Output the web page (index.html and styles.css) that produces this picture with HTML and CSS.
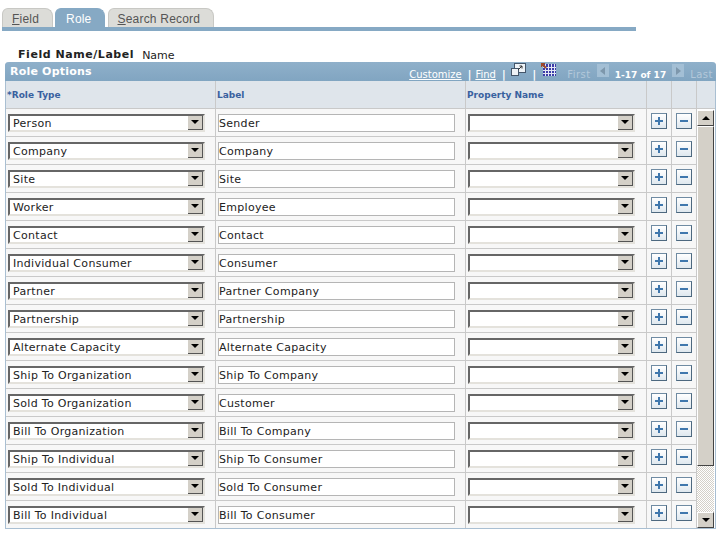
FILE: index.html
```html
<!DOCTYPE html>
<html lang="en">
  <head>
    <meta charset="UTF-8">
    <title>Role</title>
    <link rel="stylesheet" href="styles.css">
  </head>
  <body>
    <div class="tabs">
      <div class="tab"><u>F</u>ield</div>
      <div class="tab tabActive">Role</div>
      <div class="tab"><u>S</u>earch Record</div>
    </div>
    <div class="tabBar"></div>

    <p class="fieldLine"><b>Field Name/Label</b><span>Name</span></p>

    <section class="panel">
      <div class="panelHead">
        <h2>Role Options</h2>
        <div class="panelNav">
          <a>Customize</a><i>|</i><a>Find</a><i>|</i>
          <svg class="navIcon" width="15" height="14" viewBox="0 0 15 14"><rect x="3.5" y="0.5" width="11" height="9" fill="#eef3f7" stroke="#44566a"/><rect x="0.5" y="5.5" width="7" height="7" fill="#eef3f7" stroke="#44566a"/><path d="M7 7l4-4M8.5 3H11v2.5" fill="none" stroke="#333"/></svg>
          <i>|</i>
          <svg class="navIcon" width="15" height="14" viewBox="0 0 15 14"><rect x="2" y="1" width="13" height="12" fill="#3c3ca8"/><path d="M4.500 1v12M7.500 1v12M10.500 1v12M13.500 1v12M2 4.500h13M2 7.500h13M2 10.500h13" stroke="#e4e8f4"/><path d="M0 0l5 5M0 4V0h4" fill="none" stroke="#a04a28" stroke-width="2"/></svg>
          <span class="navOff navFirst">First</span>
          <span class="pageBtn"><span class="triLeft"></span></span>
          <b>1-17 of 17</b>
          <span class="pageBtn"><span class="triRight"></span></span>
          <span class="navOff">Last</span>
        </div>
      </div>

      <div class="headRow">
        <div class="colRole">*Role Type</div>
        <div class="colLabel">Label</div>
        <div class="colProp">Property Name</div>
        <div class="colBtn"></div>
        <div class="colBtn"></div>
        <div class="colScroll"></div>
      </div>

      <div class="tableBody">
        <div class="rows">
          <div class="row"><div class="colRole"><div class="sel"><span>Person</span><em></em></div></div><div class="colLabel"><input value="Sender"></div><div class="colProp"><div class="sel"><span></span><em></em></div></div><div class="colBtn"><button class="btnPlus"></button></div><div class="colBtn"><button class="btnMinus"></button></div></div>
          <div class="row"><div class="colRole"><div class="sel"><span>Company</span><em></em></div></div><div class="colLabel"><input value="Company"></div><div class="colProp"><div class="sel"><span></span><em></em></div></div><div class="colBtn"><button class="btnPlus"></button></div><div class="colBtn"><button class="btnMinus"></button></div></div>
          <div class="row"><div class="colRole"><div class="sel"><span>Site</span><em></em></div></div><div class="colLabel"><input value="Site"></div><div class="colProp"><div class="sel"><span></span><em></em></div></div><div class="colBtn"><button class="btnPlus"></button></div><div class="colBtn"><button class="btnMinus"></button></div></div>
          <div class="row"><div class="colRole"><div class="sel"><span>Worker</span><em></em></div></div><div class="colLabel"><input value="Employee"></div><div class="colProp"><div class="sel"><span></span><em></em></div></div><div class="colBtn"><button class="btnPlus"></button></div><div class="colBtn"><button class="btnMinus"></button></div></div>
          <div class="row"><div class="colRole"><div class="sel"><span>Contact</span><em></em></div></div><div class="colLabel"><input value="Contact"></div><div class="colProp"><div class="sel"><span></span><em></em></div></div><div class="colBtn"><button class="btnPlus"></button></div><div class="colBtn"><button class="btnMinus"></button></div></div>
          <div class="row"><div class="colRole"><div class="sel"><span>Individual Consumer</span><em></em></div></div><div class="colLabel"><input value="Consumer"></div><div class="colProp"><div class="sel"><span></span><em></em></div></div><div class="colBtn"><button class="btnPlus"></button></div><div class="colBtn"><button class="btnMinus"></button></div></div>
          <div class="row"><div class="colRole"><div class="sel"><span>Partner</span><em></em></div></div><div class="colLabel"><input value="Partner Company"></div><div class="colProp"><div class="sel"><span></span><em></em></div></div><div class="colBtn"><button class="btnPlus"></button></div><div class="colBtn"><button class="btnMinus"></button></div></div>
          <div class="row"><div class="colRole"><div class="sel"><span>Partnership</span><em></em></div></div><div class="colLabel"><input value="Partnership"></div><div class="colProp"><div class="sel"><span></span><em></em></div></div><div class="colBtn"><button class="btnPlus"></button></div><div class="colBtn"><button class="btnMinus"></button></div></div>
          <div class="row"><div class="colRole"><div class="sel"><span>Alternate Capacity</span><em></em></div></div><div class="colLabel"><input value="Alternate Capacity"></div><div class="colProp"><div class="sel"><span></span><em></em></div></div><div class="colBtn"><button class="btnPlus"></button></div><div class="colBtn"><button class="btnMinus"></button></div></div>
          <div class="row"><div class="colRole"><div class="sel"><span>Ship To Organization</span><em></em></div></div><div class="colLabel"><input value="Ship To Company"></div><div class="colProp"><div class="sel"><span></span><em></em></div></div><div class="colBtn"><button class="btnPlus"></button></div><div class="colBtn"><button class="btnMinus"></button></div></div>
          <div class="row"><div class="colRole"><div class="sel"><span>Sold To Organization</span><em></em></div></div><div class="colLabel"><input value="Customer"></div><div class="colProp"><div class="sel"><span></span><em></em></div></div><div class="colBtn"><button class="btnPlus"></button></div><div class="colBtn"><button class="btnMinus"></button></div></div>
          <div class="row"><div class="colRole"><div class="sel"><span>Bill To Organization</span><em></em></div></div><div class="colLabel"><input value="Bill To Company"></div><div class="colProp"><div class="sel"><span></span><em></em></div></div><div class="colBtn"><button class="btnPlus"></button></div><div class="colBtn"><button class="btnMinus"></button></div></div>
          <div class="row"><div class="colRole"><div class="sel"><span>Ship To Individual</span><em></em></div></div><div class="colLabel"><input value="Ship To Consumer"></div><div class="colProp"><div class="sel"><span></span><em></em></div></div><div class="colBtn"><button class="btnPlus"></button></div><div class="colBtn"><button class="btnMinus"></button></div></div>
          <div class="row"><div class="colRole"><div class="sel"><span>Sold To Individual</span><em></em></div></div><div class="colLabel"><input value="Sold To Consumer"></div><div class="colProp"><div class="sel"><span></span><em></em></div></div><div class="colBtn"><button class="btnPlus"></button></div><div class="colBtn"><button class="btnMinus"></button></div></div>
          <div class="row"><div class="colRole"><div class="sel"><span>Bill To Individual</span><em></em></div></div><div class="colLabel"><input value="Bill To Consumer"></div><div class="colProp"><div class="sel"><span></span><em></em></div></div><div class="colBtn"><button class="btnPlus"></button></div><div class="colBtn"><button class="btnMinus"></button></div></div>
        </div>

        <div class="scrollbar">
          <div class="scrollBtn"><span class="triUp"></span></div>
          <div class="scrollThumb"></div>
          <div class="scrollTrack"></div>
          <div class="scrollBtn"><span class="triDown"></span></div>
        </div>
      </div>
    </section>
  </body>
</html>
```

FILE: styles.css
```css
body {
  margin: 0;
  background-color: white;
  color: #222;
  font-family: "DejaVu Sans", Verdana, sans-serif;
  font-size: 11px;
}

.tabs {
  display: flex;
  gap: 2px;
  margin: 8px 0 0 2px;
  height: 19px;
}

.tab {
  padding: 0 13px 0 9px;
  line-height: 20px;
  font-family: "Liberation Sans", Arial, sans-serif;
  font-size: 12px;
  letter-spacing: 0.2px;
  color: #555;
  background-color: #dcdcd8;
  border: 1px solid #c8c8c4;
  border-bottom: none;
  border-radius: 6px 8px 0 0;
}

.tabActive {
  color: white;
  background-color: #86a9c4;
  border-color: #86a9c4;
  padding: 0 12px 0 10px;
  margin-right: 1px;
}

.tabBar {
  width: 634px;
  height: 4px;
  margin-left: 2px;
  background-color: #86a9c4;
}

.fieldLine {
  display: flex;
  gap: 8px;
  margin: 15px 0 0 18px;
  height: 16px;
  line-height: 16px;
}

.fieldLine b {
  padding-top: 1px;
  letter-spacing: 0.55px;
}

.fieldLine span {
  padding-top: 2px;
}

.panel {
  width: 709px;
  margin: 0 0 0 5px;
  border: 1px solid #a9bfd2;
  border-top: none;
  border-radius: 4px 4px 0 0;
}

.panelHead {
  display: flex;
  justify-content: space-between;
  height: 19px;
  padding: 0 3px 0 5px;
  margin: 0 -1px;
  background: linear-gradient(#8fb0ca, #81a5c1);
  border-radius: 4px 4px 0 0;
  color: white;
}

h2 {
  margin: 0;
  font-size: 11px;
  font-weight: bold;
  line-height: 20px;
  letter-spacing: 0.2px;
}

.panelNav {
  display: flex;
  align-items: center;
  gap: 6px;
  padding: 6px 0 0 0;
  font-size: 10px;
}

.panelNav a {
  text-decoration: underline;
}

.panelNav i {
  font-style: normal;
  font-weight: bold;
  margin-right: -2px;
}

.panelNav b {
  font-size: 9px;
}

.navIcon {
  align-self: flex-start;
  margin: -5px 1px 0 1px;
}

.navOff {
  color: #b3c8da;
  letter-spacing: 0.5px;
}

.navFirst {
  margin-left: 4px;
}

.pageBtn {
  display: flex;
  align-items: center;
  justify-content: center;
  align-self: flex-start;
  width: 12px;
  height: 13px;
  margin-top: -4px;
  background-color: #a3bfd5;
}

.triLeft, .triRight, .triUp, .triDown {
  display: block;
  width: 0;
  height: 0;
  border-style: solid;
}

.triLeft {
  border-width: 4px 5px 4px 0;
  border-color: transparent #7d97ac transparent transparent;
}

.triRight {
  border-width: 4px 0 4px 5px;
  border-color: transparent transparent transparent #7d97ac;
}

.triUp {
  border-width: 0 4px 4px 4px;
  border-color: transparent transparent black transparent;
}

.triDown {
  border-width: 4px 4px 0 4px;
  border-color: black transparent transparent transparent;
}

.headRow {
  display: flex;
  height: 27px;
  background-color: #dfe5eb;
  border-bottom: 1px solid #c9c9c9;
  color: #39619f;
  font-size: 9px;
  font-weight: bold;
  line-height: 28px;
}

.headRow > div {
  padding-left: 1px;
  border-right: 1px solid #c9c9c9;
}

.headRow .colScroll {
  flex: 1;
  border-right: none;
}

.colRole {
  box-sizing: border-box;
  width: 210px;
}

.colLabel {
  box-sizing: border-box;
  width: 250px;
}

.colProp {
  box-sizing: border-box;
  width: 181px;
}

.colBtn {
  box-sizing: border-box;
  width: 25px;
}

.tableBody {
  display: flex;
}

.rows {
  width: 691px;
}

.row {
  display: flex;
  height: 27px;
  background-color: #f7f7f7;
  border-bottom: 1px solid #c9c9c9;
}

.row > div {
  display: flex;
  align-items: center;
  padding-left: 2px;
  border-right: 1px solid #c9c9c9;
}

.row:last-child {
  border-bottom: none;
}

.sel {
  box-sizing: border-box;
  display: flex;
  align-items: center;
  justify-content: space-between;
  height: 18px;
  background-color: white;
  border: 2px solid;
  border-color: #666 #e4e2dc #e4e2dc #666;
}

.colRole .sel {
  width: 197px;
}

.colProp .sel {
  width: 167px;
}

.sel span {
  padding: 1px 0 0 3px;
  font-size: 11px;
  letter-spacing: 0.3px;
}

.sel em {
  display: flex;
  align-items: center;
  justify-content: center;
  width: 15px;
  height: 14px;
  background-color: #d4d0c8;
  border-right: 1px solid #555;
  border-bottom: 1px solid #555;
  box-sizing: border-box;
}

.sel em::after {
  content: "";
  border-style: solid;
  border-width: 4px 4px 0 4px;
  border-color: black transparent transparent transparent;
}

input {
  box-sizing: border-box;
  width: 237px;
  height: 18px;
  padding: 1px 0 0 0;
  background-color: white;
  border: 1px solid #b5b5b5;
  color: #222;
  font-family: "DejaVu Sans", Verdana, sans-serif;
  font-size: 11px;
  letter-spacing: 0.3px;
}

button {
  position: relative;
  box-sizing: border-box;
  width: 16px;
  height: 16px;
  margin: 0 0 3px 2px;
  padding: 0;
  background: linear-gradient(white, #dfe8ef);
  border: 1px solid #6f8ba3;
  border-right-color: #4d687f;
  border-bottom-color: #4d687f;
}

.btnPlus::before, .btnMinus::before {
  content: "";
  position: absolute;
  left: 3px;
  top: 6px;
  width: 8px;
  height: 2px;
  background-color: #3f77ad;
}

.btnPlus::after {
  content: "";
  position: absolute;
  left: 6px;
  top: 3px;
  width: 2px;
  height: 8px;
  background-color: #3f77ad;
}

.scrollbar {
  display: flex;
  flex-direction: column;
  width: 17px;
  padding-top: 1px;
}

.scrollBtn {
  display: flex;
  align-items: center;
  justify-content: center;
  box-sizing: border-box;
  height: 16px;
  background-color: #d4d0c8;
  border: 1px solid;
  border-color: white #444 #444 white;
}

.scrollThumb {
  box-sizing: border-box;
  height: 340px;
  background-color: #d4d0c8;
  border: 1px solid;
  border-color: white #444 #444 white;
}

.scrollTrack {
  flex: 1;
  background: repeating-conic-gradient(#d4d0c8 0 25%, white 0 50%) 0 0 / 2px 2px;
}
```
